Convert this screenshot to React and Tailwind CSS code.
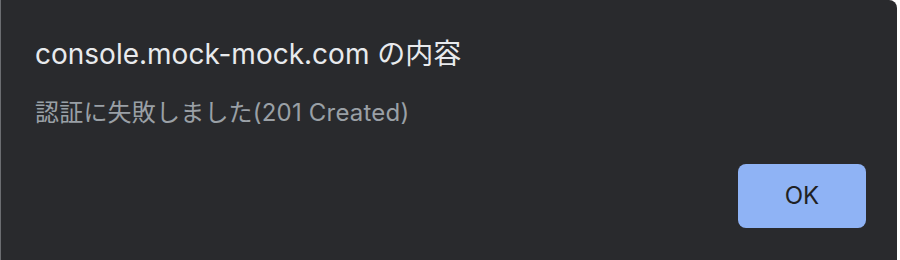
export default function App() {
  return (
    <div className="w-[900px] h-[260px] bg-white flex overflow-hidden">
      <div className="w-px h-full bg-[#6b6d71]" />
      <div
        className="w-[896px] h-[272px] bg-[#292a2d] rounded-tr-lg flex flex-col px-[34px] pt-[36px]"
        style={{ fontFamily: 'Inter, "Noto Sans CJK JP", sans-serif' }}
      >
        <h1 className="text-[28px] leading-[36px] text-[#e8eaed] whitespace-nowrap">
          console.mock-mock.com の内容
        </h1>
        <p className="mt-[25px] text-[24px] leading-[32px] tracking-[0.2px] text-[#9aa0a6] whitespace-nowrap">
          認証に失敗しました(201 Created)
        </p>
        <div className="flex justify-end mt-[35px]">
          <button className="w-[128px] h-[64px] mr-[-3px] rounded-lg bg-[#8fb3f5] text-[#202124] text-[24px]">
            OK
          </button>
        </div>
      </div>
    </div>
  );
}
